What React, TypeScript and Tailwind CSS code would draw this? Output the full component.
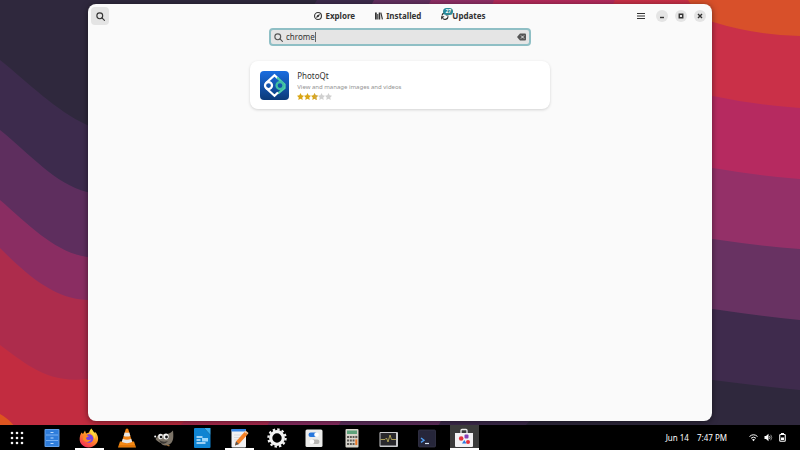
import { useState } from "react";
import type { ReactNode } from "react";

const bands = [
  { from: "#3d2b4d", to: "#3f2b4d", d: "M0 60 C30 84 55 110 87 125 C180 160 270 80 317 0 H800 V390 Q760 386 713 380 C630 370 540 385 509 450 H0Z" },
  { from: "#5e2e5e", to: "#683262", d: "M0 130 C30 154 55 184 87 192 C190 220 320 110 374 0 H800 V320 Q760 316 713 309 C600 300 470 350 425 450 H0Z" },
  { from: "#8a2d62", to: "#943068", d: "M0 200 C30 226 55 252 87 257 C200 280 370 130 431 0 H800 V249 Q760 246 713 239 C590 240 380 330 325 450 H0Z" },
  { from: "#ad2c4c", to: "#b62a60", d: "M0 248 C28 276 55 299 87 300 C220 310 440 150 494 0 H800 V179 Q760 176 713 168 C560 180 320 310 254 450 H0Z" },
  { from: "#c22c40", to: "#ca3048", d: "M0 345 C24 362 46 384 87 379 C260 350 550 150 615 0 H800 V108 Q755 105 713 96 C560 120 260 350 152 450 H0Z" },
];

function Wallpaper() {
  return (
    <svg className="absolute inset-0 h-full w-full" viewBox="0 0 800 450" preserveAspectRatio="none" aria-hidden="true">
      <defs>
        {bands.map((b, i) => (
          <linearGradient key={b.from} id={`band${i}`} x1="0" x2="1">
            <stop offset="0.12" stopColor={b.from} />
            <stop offset="0.88" stopColor={b.to} />
          </linearGradient>
        ))}
      </defs>
      <rect width="800" height="450" fill="#2f283d" />
      {bands.map((b, i) => (
        <path key={b.from} d={b.d} fill={`url(#band${i})`} />
      ))}
      <path d="M688 0 Q698 17 713 22 Q755 35 800 36 V0Z" fill="#d8502a" />
      <path d="M0 414 Q8 418 16 428 V450 H0Z" fill="#dd5520" />
    </svg>
  );
}

/* ── Symbolic icons ── */
function SearchIcon({ className = "h-[9px] w-[9px]" }) {
  return (
    <svg className={className} viewBox="0 0 16 16" fill="none" stroke="currentColor" strokeWidth="2">
      <circle cx="6.7" cy="6.7" r="5.2" />
      <path d="M10.6 10.6 15 15" strokeLinecap="round" />
    </svg>
  );
}

function ExploreIcon() {
  return (
    <svg className="h-2 w-2" viewBox="0 0 16 16" fill="none" stroke="currentColor">
      <circle cx="8" cy="8" r="6.9" strokeWidth="2.2" />
      <path d="M12.2 3.8 9.6 9.6 3.8 12.2 6.4 6.4Z" fill="currentColor" stroke="none" />
    </svg>
  );
}

function InstalledIcon() {
  return (
    <svg className="h-2 w-2" viewBox="0 0 16 16" fill="currentColor">
      <path d="M0 1h3.500v14H0zM4.500 4h2v11h-2zM7.500 1h3v14h-3zM10.800 1.600l2-.5L16 14.300l-2.300.6z" />
    </svg>
  );
}

function UpdatesIcon() {
  return (
    <svg className="h-2 w-2" viewBox="0 0 16 16" fill="none" stroke="currentColor" strokeWidth="2.4">
      <path d="M2 7a6 6 0 0 1 10-3.400M14 8.500a6 6 0 0 1-10.500 4.200" />
      <path d="M0 8.500h7L.5 15.500ZM15 6.800H9L14.600 1Z" fill="currentColor" stroke="none" />
    </svg>
  );
}

function Star({ fill }: { fill: "full" | "half" | "none" }) {
  return (
    <svg className="h-[7px] w-[7px]" viewBox="0 0 16 16">
      <path
        d="M8 0l2.500 5.300 5.500.7-4 4 1 5.800L8 13l-5 2.800 1-5.800-4-4 5.500-.7z"
        fill={fill === "none" ? "#d0d0d0" : "#d9a514"}
      />
      {fill === "half" && <path d="M8 0l2.500 5.300 5.500.7-4 4 1 5.800L8 13z" fill="#cfa640" />}
    </svg>
  );
}

function PhotoQtLogo() {
  return (
    <svg className="h-[29px] w-[29px] shrink-0" viewBox="0 0 58 58">
      <defs>
        <linearGradient id="pqt" x1="0" y1="0" x2="0" y2="1">
          <stop offset="0" stopColor="#1a6de0" />
          <stop offset="1" stopColor="#0b3a78" />
        </linearGradient>
      </defs>
      <rect width="58" height="58" rx="8" fill="url(#pqt)" />
      <g fill="none" strokeWidth="4.500">
        <path d="M12 24 29 8.500 36 15" stroke="#fff" />
        <path d="M34 13 49 27v7L36 45" stroke="#4fd0a8" />
        <path d="M12 34 29 49.500 36 43" stroke="#fff" />
        <circle cx="17" cy="29" r="7" stroke="#fff" />
        <circle cx="40" cy="29" r="7" stroke="#3fbfa3" />
      </g>
    </svg>
  );
}

/* ── Panel icons ── */
const icon = "h-5 w-5";

const apps: { name: string; running?: boolean; active?: boolean; art: ReactNode }[] = [
  {
    name: "Files",
    art: (
      <svg className={icon} viewBox="0 0 20 20">
        <rect x="2.500" y="1" width="15" height="18" rx="1" fill="#62a0ea" />
        <rect x="3.500" y="2" width="13" height="16" fill="#2f7ddb" />
        <path d="M4 7h12M4 12.500h12" stroke="#78b0f3" />
        <path d="M8.500 4.500h3M8.500 10h3M8.500 15.500h3" stroke="#b9dafd" strokeWidth="1.200" />
      </svg>
    ),
  },
  {
    name: "Firefox",
    running: true,
    art: (
      <svg className={icon} viewBox="0 0 20 20">
        <defs>
          <linearGradient id="fox" x1=".8" y1="0" x2=".2" y2="1">
            <stop offset="0" stopColor="#ffe14d" />
            <stop offset=".45" stopColor="#ff9225" />
            <stop offset="1" stopColor="#f5245c" />
          </linearGradient>
        </defs>
        <path d="M2.500 4.500 4 6l2-3.500 1 3 3-1c.5-2 1.500-3 2.500-4 1 2.500 2 3 3.500 4.500l.5-1c3 4 3.500 8 1 11.500-4 5-11 5-14.800 1C-.5 13 .500 8 2.500 4.500Z" fill="url(#fox)" />
        <circle cx="10" cy="10.500" r="4.300" fill="#7542e5" />
        <path d="M4.500 7.500c2-1 4-.5 5.500 1-2 .2-2.800 1-3 2 1 2 4 2 5.500.500-1 3-6 4.500-8.500.5z" fill="#ff8a22" />
        <path d="M11 3c0 3 4 3 4.500 8 2-3 .500-6-1-7L12.500.8z" fill="#ffd83c" />
      </svg>
    ),
  },
  {
    name: "VLC",
    art: (
      <svg className={icon} viewBox="0 0 20 20">
        <path d="M3 13.500h14l2 6H1z" fill="#f48a13" />
        <path d="M8.800 1q1.200-1 2.400 0L15.500 15q-5.500 3-11 0z" fill="#f38415" />
        <path d="m7.700 4.500-1 3.400q3.300 1.300 6.600 0l-1-3.400q-2.300.7-4.600 0ZM5.800 10.800l-1 3.200q5.200 2.300 10.400 0l-1-3.200q-4.200 1.700-8.400 0Z" fill="#e6e6e6" />
        <path d="M2 18h16" stroke="#d26500" />
      </svg>
    ),
  },
  {
    name: "GIMP",
    art: (
      <svg className={icon} viewBox="0 0 20 20">
        <path d="M19 2.500c.5 5 1 11-3 13.500-4 2.500-8 1.500-9-1-2-.500-4-2-5.500-4C3 9 4 6 7 6c4 .5 8 1 12-3.500Z" fill="#7c7468" />
        <path d="M5 12q4 3 9 1-3 4-7 2z" fill="#3b3733" />
        <ellipse cx="6.500" cy="8.500" rx="2.300" ry="2.700" fill="#eee" />
        <ellipse cx="12" cy="8.500" rx="2.700" ry="3" fill="#f4f4f4" />
        <circle cx="7" cy="9" r="1.300" fill="#151515" />
        <circle cx="12.500" cy="9" r="1.400" fill="#151515" />
        <circle cx="1.200" cy="8.500" r="1" fill="#fff" />
        <path d="m10 16 6 1.500-1 1z" fill="#a67740" />
      </svg>
    ),
  },
  {
    name: "LibreOffice Writer",
    art: (
      <svg className={icon} viewBox="0 0 20 20">
        <path d="M2 1q0-1 1-1h9l6.500 7v12q0 1-1 1H3q-1 0-1-1z" fill="#0f84d2" />
        <path d="M12 0h6.500v7z" fill="#3aaeef" />
        <path d="M4.500 9h6M4.500 12h4M4.500 15h9" stroke="#cdeaff" strokeWidth="1.500" />
        <rect x="10" y="10" width="6" height="3.500" fill="#9bd7fa" />
      </svg>
    ),
  },
  {
    name: "Text Editor",
    running: true,
    art: (
      <svg className={icon} viewBox="0 0 20 20">
        <rect x="2.500" y="1" width="14.500" height="18.500" rx="1" fill="#f1f1f3" />
        <path d="M2.500 1h14.500v2.500H2.500z" fill="#3584e4" />
        <path d="M5 7h8M5 9.500h6M5 12h4" stroke="#d3d4d9" strokeWidth=".8" />
        <path d="m7 13.500 8.500-9.500 3 2.500L10 16l-4 1.500z" fill="#f58025" />
        <path d="m15.500 4 1-1.500 3 2.500-1 1.500z" fill="#fac18c" />
        <path d="m7 13.500 3 2.500-4 1.500z" fill="#555" />
      </svg>
    ),
  },
  {
    name: "Settings",
    art: (
      <svg className={icon} viewBox="0 0 20 20">
        <circle cx="10" cy="10" r="8.600" fill="none" stroke="#f3f3f3" strokeWidth="2.200" strokeDasharray="2.400 2.100" />
        <circle cx="10" cy="10" r="6.300" fill="none" stroke="#f3f3f3" strokeWidth="3.200" />
      </svg>
    ),
  },
  {
    name: "Tweaks",
    art: (
      <svg className={icon} viewBox="0 0 20 20">
        <rect x="1.500" y="1.500" width="17" height="17.500" rx="1.500" fill="#ececea" />
        <rect x="4.500" y="4.500" width="9" height="4.500" rx="2.200" fill="#2877dc" />
        <circle cx="12.500" cy="6.700" r="2.300" fill="#fff" />
        <rect x="7" y="11.500" width="8.500" height="4.500" rx="2.200" fill="#b8b7b4" />
        <circle cx="8" cy="13.700" r="2.300" fill="#fff" />
      </svg>
    ),
  },
  {
    name: "Calculator",
    art: (
      <svg className={icon} viewBox="0 0 20 20">
        <rect x="3.500" y="1" width="13" height="18.500" rx="1" fill="#d8d5cc" />
        <rect x="5" y="2.500" width="10" height="3.500" fill="#5da27b" />
        <path d="M5 9h7.500M5 12.500h7.500M5 16h7.500" stroke="#5b5854" strokeWidth="2.200" strokeDasharray="2 .8" />
        <path d="M13.300 9h2" stroke="#5b5854" strokeWidth="2.200" />
        <path d="M13.300 11.400h2v5.700h-2z" fill="#ed7520" />
      </svg>
    ),
  },
  {
    name: "System Monitor",
    art: (
      <svg className={icon} viewBox="0 0 20 20">
        <rect x=".5" y="4" width="18.500" height="15" rx="1" fill="#c9c9cc" />
        <rect x="1.500" y="5" width="15.500" height="12.500" fill="#29282c" />
        <path d="M1.500 11.500h4.500l1.500-1.500 1.500 4 2-7 1.500 4.500h4.500" fill="none" stroke="#b9aa5a" strokeWidth=".9" />
      </svg>
    ),
  },
  {
    name: "Terminal",
    art: (
      <svg className={icon} viewBox="0 0 20 20">
        <rect x="1.500" y="2" width="17" height="17" rx="1" fill="#26263a" stroke="#3a3a4f" strokeWidth=".7" />
        <path d="m4 10 3 2.200-3 2.200" fill="none" stroke="#4e9ff2" strokeWidth="1.400" />
        <path d="M8 15.500h4" stroke="#d5e4f5" strokeWidth="1.200" />
      </svg>
    ),
  },
  {
    name: "Software",
    running: true,
    active: true,
    art: (
      <svg className={icon} viewBox="0 0 20 20">
        <path d="M7 5.500V2.500q0-1 1-1h4q1 0 1 1v3" fill="none" stroke="#ececec" strokeWidth="1.300" />
        <path d="M1 5h18v13q0 1-1 1H2q-1 0-1-1z" fill="#f3f2f4" />
        <circle cx="7.200" cy="10.500" r="2.300" fill="#e5323d" />
        <rect x="10.500" y="6.500" width="4" height="4" rx="1" fill="#8640b6" />
        <path d="M8 15.500 10.300 12l2.200 3.500z" fill="#2b7be0" />
        <circle cx="14" cy="14" r="2" fill="#e5323d" />
      </svg>
    ),
  },
];

function Header({ tab, setTab }: { tab: string; setTab: (t: string) => void }) {
  const tabs = [
    { label: "Explore", icon: <ExploreIcon /> },
    { label: "Installed", icon: <InstalledIcon /> },
    { label: "Updates", icon: <UpdatesIcon />, badge: "27" },
  ];
  const controls = [
    { label: "Minimize", d: "M4 11h8" },
    { label: "Maximize", d: "M4.500 4.500h7v7h-7z" },
    { label: "Close", d: "m4 4 8 8M12 4l-8 8" },
  ];

  return (
    <header className="grid grid-cols-[1fr_auto_1fr] items-center h-6 px-[3px]">
      <button aria-label="Search" aria-pressed="true" className="flex items-center justify-center w-[18px] h-[18px] rounded bg-[#e4e4e4]">
        <SearchIcon />
      </button>

      <nav className="flex items-center gap-5">
        {tabs.map((t) => (
          <button
            key={t.label}
            onClick={() => setTab(t.label)}
            aria-current={tab === t.label ? "page" : undefined}
            className="relative flex items-center gap-[3px] text-[8px] leading-3 font-bold"
          >
            {t.icon}
            {t.label}
            {t.badge && (
              <span className="absolute left-[2px] -top-[2px] flex items-center justify-center w-[10px] h-[7px] rounded-full bg-[#2b8a98] text-white text-[5px] leading-none">
                {t.badge}
              </span>
            )}
          </button>
        ))}
      </nav>

      <div className="flex items-center justify-end gap-[7px] pr-[3px]">
        <button aria-label="Menu" className="flex items-center justify-center w-3 h-3 mr-[2px]">
          <svg className="h-2 w-2" viewBox="0 0 16 16" stroke="currentColor" strokeWidth="2.200">
            <path d="M0 3h16M0 8h16M0 13h16" />
          </svg>
        </button>
        {controls.map((c) => (
          <button key={c.label} aria-label={c.label} className="flex items-center justify-center w-3 h-3 rounded-full bg-[#e4e4e4]">
            <svg className="h-2 w-2" viewBox="0 0 16 16" fill="none" stroke="currentColor" strokeWidth="2.800">
              <path d={c.d} />
            </svg>
          </button>
        ))}
      </div>
    </header>
  );
}

export default function App() {
  const [query, setQuery] = useState("chrome");
  const [tab, setTab] = useState("");

  return (
    <div className="relative flex flex-col h-screen overflow-hidden font-['Noto_Sans',sans-serif] text-[#333]">
      <Wallpaper />

      {/* ── Software window ── */}
      <main className="relative flex flex-col flex-1 mx-[11%] my-1 rounded-lg bg-[#fafafa] shadow-[0_1px_6px_rgba(0,0,0,0.5)]">
        <Header tab={tab} setTab={setTab} />

        <label className="flex items-center gap-[3px] self-center w-[42%] h-[18px] px-[3px] rounded border-2 border-[#8fbfc5] bg-[#e5e5e5]">
          <SearchIcon className="h-[9px] w-[9px] shrink-0 text-[#555]" />
          <span className="relative flex flex-1 items-center">
            <input
              type="text"
              aria-label="Search apps"
              value={query}
              onChange={(e) => setQuery(e.target.value)}
              className="w-full bg-transparent text-[8px] leading-3 outline-none"
            />
            {/* caret sits after the typed text */}
            <span className="absolute left-0 flex items-center pointer-events-none" aria-hidden="true">
              <span className="invisible text-[8px] leading-3">{query}</span>
              <span className="w-px h-[10px] bg-[#666]" />
            </span>
          </span>
          <button aria-label="Clear search" onClick={() => setQuery("")} className="shrink-0">
            <svg className="h-2 w-[9px]" viewBox="0 0 18 16">
              <path d="M6 1h10q2 0 2 2v10q0 2-2 2H6L0 8z" fill="#555" />
              <path d="m8 5 6 6M14 5l-6 6" stroke="#e5e5e5" strokeWidth="2" />
            </svg>
          </button>
        </label>

        <ul className="self-center w-[48%] mt-[15px]">
          <li>
            <a href="#photoqt" className="flex items-center gap-2 h-12 px-[10px] rounded-lg bg-white shadow-[0_1px_3px_rgba(0,0,0,0.16)]">
              <PhotoQtLogo />
              <div className="flex flex-col">
                <span className="text-[8px] leading-3">PhotoQt</span>
                <span className="text-[6px] leading-[10px] text-[#929292]">View and manage images and videos</span>
                <span className="flex h-[9px] items-center" role="img" aria-label="3 out of 5 stars">
                  <Star fill="full" />
                  <Star fill="full" />
                  <Star fill="half" />
                  <Star fill="none" />
                  <Star fill="none" />
                </span>
              </div>
            </a>
          </li>
        </ul>
      </main>

      {/* ── Panel ── */}
      <footer className="relative flex items-stretch h-[25px] bg-black text-white">
        <button aria-label="Show applications" className="flex items-center justify-center w-[33px]">
          <svg className="h-[14px] w-[14px]" viewBox="0 0 14 14" fill="#f5f5f5">
            {[2, 7, 12].map((y) => [2, 7, 12].map((x) => <circle key={`${x}-${y}`} cx={x} cy={y} r="1.300" />))}
          </svg>
        </button>

        <nav className="grid grid-cols-12 w-[450px]">
          {apps.map((app) => (
            <button
              key={app.name}
              aria-label={app.name}
              className={`flex items-center justify-center justify-self-center w-[29px] border-b-2 pt-[2px] ${
                app.running ? "border-white" : "border-transparent"
              } ${app.active ? "bg-[#3b3b3b]" : ""}`}
            >
              {app.art}
            </button>
          ))}
        </nav>

        <div className="flex items-center ml-auto pr-[14px] text-[8px] leading-3">
          <button className="flex gap-2">
            <span>Jun 14</span>
            <span>7:47 PM</span>
          </button>
          <button aria-label="System menu" className="flex items-center gap-[6px] ml-[22px]">
            <svg className="h-[9px] w-[9px]" viewBox="0 0 18 18" fill="none" stroke="#fff" strokeWidth="2">
              <path d="M1 7q8-7 16 0" />
              <path d="M4 10.500q5-4.500 10 0" />
              <path d="m6 13 3 3.500 3-3.500q-3-2.500-6 0Z" fill="#fff" stroke="none" />
            </svg>
            <svg className="h-[9px] w-[9px]" viewBox="0 0 18 18" fill="none" stroke="#fff" strokeWidth="1.600">
              <path d="M1 6h3l5-4.500v15L4 12H1z" fill="#fff" stroke="none" />
              <path d="M11 6q2 3 0 6" />
              <path d="M13.500 3.500q4 5.500 0 11" stroke="#aaa" />
            </svg>
            <svg className="h-[9px] w-[7px]" viewBox="0 0 14 18">
              <path d="M4 2V0h6v2" fill="#fff" />
              <rect x="1.500" y="3" width="11" height="13.500" rx="1.500" fill="none" stroke="#fff" strokeWidth="2.200" />
              <rect x="4" y="9" width="6" height="5" fill="#fff" />
            </svg>
          </button>
        </div>
      </footer>
    </div>
  );
}
